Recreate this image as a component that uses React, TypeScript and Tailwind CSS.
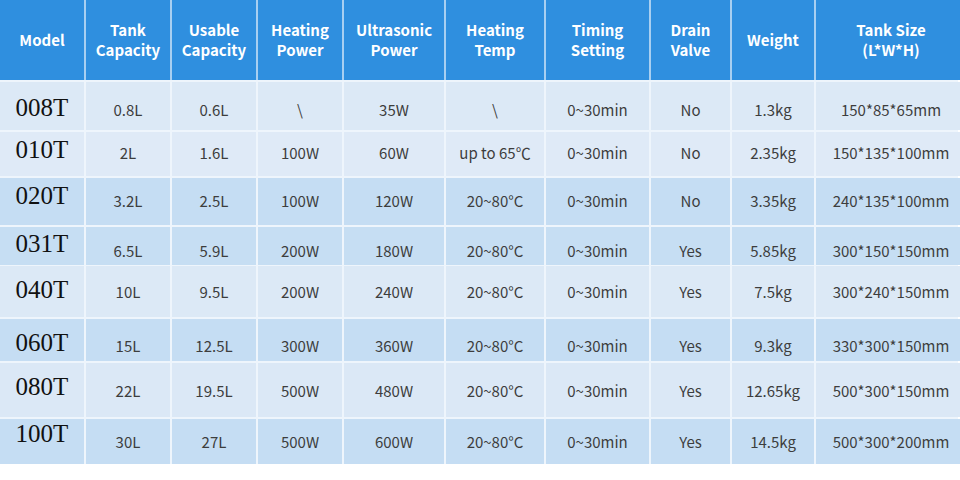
import React from "react";

const cols =
  "grid grid-cols-[84px_84px_84px_84px_100px_98px_103px_79px_82px_150px] gap-x-[2px]";

const headers = [
  ["Model"],
  ["Tank", "Capacity"],
  ["Usable", "Capacity"],
  ["Heating", "Power"],
  ["Ultrasonic", "Power"],
  ["Heating", "Temp"],
  ["Timing", "Setting"],
  ["Drain", "Valve"],
  ["Weight"],
  ["Tank Size", "(L*W*H)"],
];

// h = cell height, m / v = nudge for model text and for the value texts
const rows = [
  { model: "008T", h: "h-[48px]", bg: "bg-[#dce9f6]", m: "translate-y-[2px]", v: "translate-y-[4px]", vals: ["0.8L", "0.6L", "\\", "35W", "\\", "0~30min", "No", "1.3kg", "150*85*65mm"] },
  { model: "010T", h: "h-[44px]", bg: "bg-[#dfeaf7]", m: "-translate-y-[4px]", v: "-translate-y-[1px]", vals: ["2L", "1.6L", "100W", "60W", "up to 65℃", "0~30min", "No", "2.35kg", "150*135*100mm"] },
  { model: "020T", h: "h-[47px]", bg: "bg-[#c5ddf3]", m: "-translate-y-[6px]", v: "translate-y-[0px]", vals: ["3.2L", "2.5L", "100W", "120W", "20~80°C", "0~30min", "No", "3.35kg", "240*135*100mm"] },
  { model: "031T", h: "h-[37px]", bg: "bg-[#c6def3]", m: "-translate-y-[2px]", v: "translate-y-[5px]", vals: ["6.5L", "5.9L", "200W", "180W", "20~80°C", "0~30min", "Yes", "5.85kg", "300*150*150mm"] },
  { model: "040T", h: "h-[51px]", bg: "bg-[#dce9f6]", m: "-translate-y-[2px]", v: "translate-y-[1px]", vals: ["10L", "9.5L", "200W", "240W", "20~80°C", "0~30min", "Yes", "7.5kg", "300*240*150mm"] },
  { model: "060T", h: "h-[42px]", bg: "bg-[#c5ddf3]", m: "translate-y-[3px]", v: "translate-y-[6px]", vals: ["15L", "12.5L", "300W", "360W", "20~80°C", "0~30min", "Yes", "9.3kg", "330*300*150mm"] },
  { model: "080T", h: "h-[54px]", bg: "bg-[#dbe8f6]", m: "-translate-y-[3px]", v: "translate-y-[1px]", vals: ["22L", "19.5L", "500W", "480W", "20~80°C", "0~30min", "Yes", "12.65kg", "500*300*150mm"] },
  { model: "100T", h: "h-[45px]", bg: "bg-[#c5ddf3]", m: "-translate-y-[8px]", v: "translate-y-[1px]", vals: ["30L", "27L", "500W", "600W", "20~80°C", "0~30min", "Yes", "14.5kg", "500*300*200mm"] },
];

export default function App() {
  return (
    <div className="w-[960px] h-[480px] bg-white overflow-hidden">
      <div className="w-[958px] flex flex-col gap-y-[2px] bg-[#eef5fc]">
        <div className={`${cols} h-[80px] bg-[#a8cff1]`}>
          {headers.map((lines, i) => (
            <div
              key={i}
              className="bg-[#2f8fdf] flex flex-col items-center justify-center text-white font-bold text-[15px] leading-[20px] font-['Noto_Sans_CJK_SC','Noto_Sans',sans-serif]"
            >
              {lines.map((l) => (
                <span key={l}>{l}</span>
              ))}
            </div>
          ))}
        </div>
        {rows.map((r) => (
          <div key={r.model} className={`${cols} ${r.h}`}>
            <div className={`${r.bg} flex items-center justify-center`}>
              <span
                className={`${r.m} text-[25px] text-[#111] font-['Liberation_Serif',serif]`}
              >
                {r.model}
              </span>
            </div>
            {r.vals.map((v, i) => (
              <div key={i} className={`${r.bg} flex items-center justify-center`}>
                <span
                  className={`${r.v} text-[15px] text-[#3d3d3d] font-['Noto_Sans_CJK_SC','Noto_Sans',sans-serif] whitespace-nowrap`}
                >
                  {v}
                </span>
              </div>
            ))}
          </div>
        ))}
      </div>
    </div>
  );
}
